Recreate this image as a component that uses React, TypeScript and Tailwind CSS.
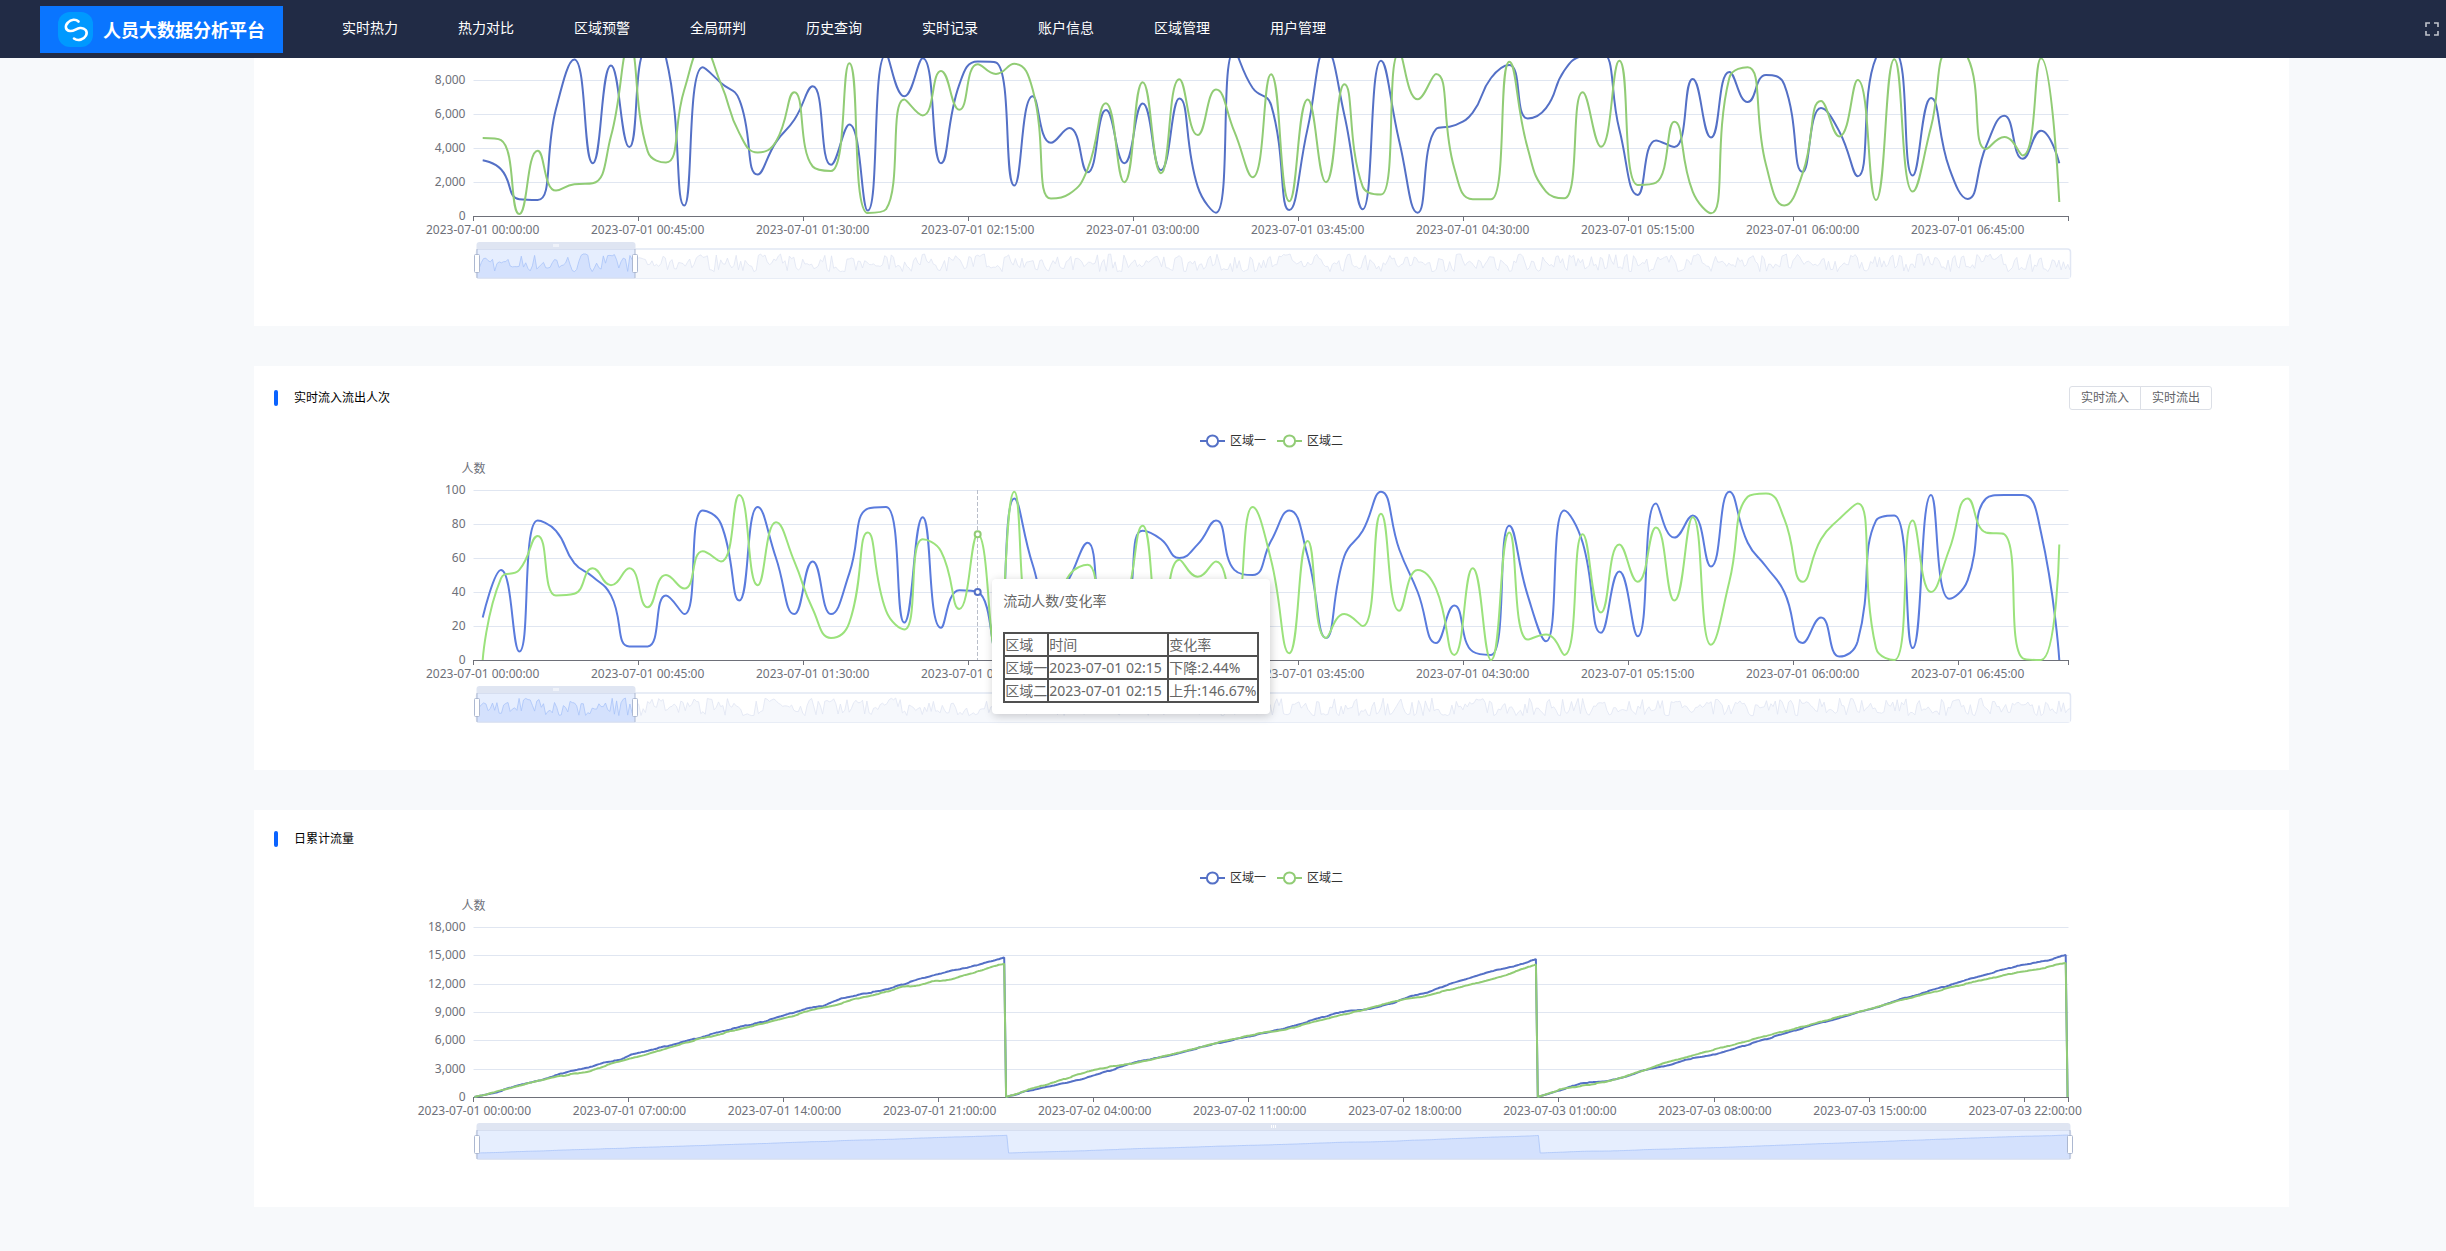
import React from "react";

const BLUE = "#5470C6";
const GREEN = "#91CC75";
const BLUE_ACTIVE = "#5A7BDD";
const GREEN_ACTIVE = "#9BE27C";

// Plot geometry in chart units
const WIDTH = 1995;
const LEFT = 199.5;
const RIGHT = 1794.5;
const TOP = 80;
const BOTTOM = 250;
const VIEW_TOP = 48;
const VIEW_HEIGHT = 292;
const SLIDER = { left: 203, right: 1796, top: 283, height: 29 };

const NAV = ["实时热力", "热力对比", "区域预警", "全局研判", "历史查询", "实时记录", "账户信息", "区域管理", "用户管理"];

const headcountOne = [
  3285, 2750, 983, 944, 6310, 9205, 3108, 8850, 4050, 9850, 9300, 610, 8750, 7830, 6850, 2440, 4350, 5660, 7630, 3010,
  5390, 315, 9500, 7040, 9280, 3108, 7730, 9087, 9030, 1790, 7040, 4308, 5173, 2577, 6235, 3108, 6610, 2695, 6904, 1730,
  197, 9700, 7530, 6550, 354, 5170, 9800, 5960, 393, 9127, 4386, 197, 5114, 5330, 6080, 8120, 8890, 5743, 6350, 8556,
  9440, 9600, 5100, 1240, 4445, 4052, 8065, 4622, 8478, 6707, 8300, 7730, 2596, 6353, 4976, 2340, 9300, 9650, 2380, 6943,
  2813, 1003, 4090, 5900, 3363, 5016, 3108,
];
const headcountTwo = [
  4583, 4465, 118, 3835, 1495, 1870, 1928, 4700, 9950, 3800, 3147, 7430, 9890, 7770, 4878, 3737, 4386, 7278, 2911, 2655,
  8990, 177, 393, 6845, 5920, 8537, 6255, 8930, 8360, 8950, 7435, 1023, 1298, 2773, 6629, 1987, 7868, 2518, 8045, 4760,
  7435, 4976, 2282, 8340, 865, 6845, 1987, 7750, 1730, 1259, 9600, 6865, 8360, 2813, 983, 983, 9070, 3990, 1436, 1042,
  7278, 4072, 9127, 1830, 1967, 5547, 1436, 157, 8124, 8753, 3010, 610, 2518, 6766, 4681, 8006, 944, 9225, 1436, 5232,
  9700, 9323, 3934, 4642, 3560, 9284, 826,
];
const flowOne = [
  25, 53, 5, 82, 76, 57, 49, 38, 8, 8, 38, 27, 88, 80, 35, 90, 60, 27, 58, 27, 51, 89, 90, 22, 84, 19, 41, 40, 5, 95, 56,
  28, 48, 69, 20, 25, 76, 71, 60, 68, 82, 53, 50, 70, 88, 61, 13, 61, 76, 99, 65, 40, 10, 32, 5, 3, 79, 38, 11, 88, 69,
  16, 52, 14, 92, 72, 85, 55, 99, 69, 55, 40, 10, 25, 2, 11, 82, 85, 7, 97, 36, 47, 95, 97, 97, 75, 0,
];
const flowTwo = [
  0, 48, 53, 73, 38, 39, 54, 44, 54, 31, 50, 42, 64, 58, 97, 44, 81, 58, 30, 13, 22, 75, 29, 18, 71, 64, 30, 74, 5, 99,
  20, 25, 50, 56, 10, 30, 79, 15, 59, 49, 58, 25, 90, 59, 4, 70, 13, 27, 20, 86, 29, 53, 42, 3, 54, 0, 75, 12, 15, 3, 74,
  28, 68, 46, 78, 35, 84, 9, 46, 96, 98, 83, 46, 71, 83, 92, 7, 0, 82, 40, 65, 95, 75, 74, 1, 0, 68,
];

// Cumulative totals per day: [five-minute slot, total]
type Knot = [number, number];
const totalOne: Knot[][] = [
  [[0, 0], [11, 460], [23, 1200], [36, 1800], [51, 2720], [62, 3110], [70, 3680], [79, 3920], [85, 4490], [100, 5200], [120, 6190], [137, 7110], [154, 7850], [168, 8630], [179, 9330], [189, 9620], [199, 10430], [212, 11000], [220, 11210], [229, 11740], [238, 12310], [248, 12840], [260, 13440], [267, 13650], [275, 14110], [281, 14430], [287, 14780]],
  [[0, 0], [12, 670], [26, 1240], [41, 1910], [55, 2720], [72, 3780], [87, 4310], [101, 5020], [116, 5760], [133, 6470], [150, 7210], [167, 8200], [181, 8980], [197, 9370], [210, 9970], [219, 10680], [227, 10960], [239, 11880], [254, 12800], [266, 13470], [275, 13830], [287, 14600]],
  [[0, 0], [12, 710], [24, 1490], [36, 1660], [46, 2020], [55, 2690], [72, 3430], [80, 3960], [89, 4240], [97, 4560], [140, 7100], [182, 9400], [195, 10240], [241, 12880], [260, 13900], [275, 14400], [286, 15050], [287, 0]],
];
const totalTwo: Knot[][] = [
  [[0, 0], [11, 530], [23, 1170], [36, 1770], [47, 2230], [62, 2720], [76, 3640], [91, 4380], [105, 5230], [120, 6050], [137, 6860], [154, 7670], [173, 8590], [183, 9230], [195, 9720], [207, 10400], [222, 11070], [231, 11630], [241, 11810], [248, 12230], [258, 12410], [265, 12910], [275, 13400], [281, 13830], [287, 14110]],
  [[0, 0], [12, 780], [26, 1560], [43, 2620], [56, 3180], [67, 3470], [87, 4380], [116, 5830], [137, 6750], [152, 7140], [167, 7990], [191, 9090], [200, 9620], [215, 10330], [225, 10610], [239, 11280], [256, 12090], [271, 12910], [287, 14040]],
  [[0, 0], [12, 780], [24, 1200], [36, 1560], [48, 2190], [68, 3540], [84, 4380], [97, 5100], [140, 7300], [182, 9400], [195, 10150], [230, 11900], [260, 13200], [275, 13700], [286, 14200], [287, 0]],
];

function seeded(seed: number) {
  let s = seed;
  return () => {
    s = (s * 16807) % 2147483647;
    return s / 2147483647;
  };
}

function expandDays(days: Knot[][], seed: number): number[] {
  const next = seeded(seed);
  const out: number[] = [];
  days.forEach((knots) => {
    let k = 0;
    let jitter = 0;
    for (let i = 0; i < 288; i++) {
      while (k < knots.length - 2 && i > knots[k + 1][0]) k++;
      const [x0, y0] = knots[k];
      const [x1, y1] = knots[k + 1];
      if (i % 4 === 0) jitter = (next() - 0.5) * 90;
      const v = y0 + ((y1 - y0) * (i - x0)) / (x1 - x0);
      out.push(i < 4 || i > 284 ? v : v + jitter);
    }
  });
  return out;
}

function toPoints(values: number[], max: number): Knot[] {
  const band = (RIGHT - LEFT) / values.length;
  return values.map((v, i) => [LEFT + (i + 0.5) * band, BOTTOM - (v / max) * (BOTTOM - TOP)]);
}

const clamp = (v: number, a: number, b: number) => Math.max(Math.min(a, b), Math.min(Math.max(a, b), v));

// Bezier smoothing whose control points never overshoot the neighbouring samples
function smoothPath(pts: Knot[]): string {
  const smooth = 0.5;
  let d = `M${pts[0][0].toFixed(1)} ${pts[0][1].toFixed(1)}`;
  let [c0x, c0y] = pts[0];
  for (let i = 1; i < pts.length; i++) {
    const [px, py] = pts[i - 1];
    const [x, y] = pts[i];
    let c1x = x;
    let c1y = y;
    let nx = x;
    let ny = y;
    if (i < pts.length - 1) {
      const [qx, qy] = pts[i + 1];
      const lenPrev = Math.hypot(x - px, y - py);
      const lenNext = Math.hypot(qx - x, qy - y);
      const ratio = lenNext / (lenNext + lenPrev);
      nx = clamp(x + (qx - px) * smooth * ratio, x, qx);
      ny = clamp(y + (qy - py) * smooth * ratio, y, qy);
      c1x = clamp(x - ((nx - x) * lenPrev) / lenNext, px, x);
      c1y = clamp(y - ((ny - y) * lenPrev) / lenNext, py, y);
      nx = x + ((x - c1x) * lenNext) / lenPrev;
      ny = y + ((y - c1y) * lenNext) / lenPrev;
    }
    d += `C${[c0x, c0y, c1x, c1y, x, y].map((n) => n.toFixed(1)).join(" ")}`;
    c0x = nx;
    c0y = ny;
  }
  return d;
}

const linePath = (pts: Knot[]) => "M" + pts.map(([x, y]) => `${x.toFixed(1)} ${y.toFixed(1)}`).join("L");

function overview(values: number[]): string {
  const lo = SLIDER.top + SLIDER.height - 6;
  const hi = SLIDER.top + 5;
  const max = Math.max(...values);
  const step = (SLIDER.right - SLIDER.left) / (values.length - 1);
  return linePath(values.map((v, i) => [SLIDER.left + i * step, lo - (v / max) * (lo - hi)]));
}

function noise(seed: number): number[] {
  const next = seeded(seed);
  const out: number[] = [];
  let v = 0.5;
  for (let i = 0; i < 720; i++) {
    v = next() > 0.75 ? v + (next() - 0.5) * 0.3 : next();
    v = Math.max(0.02, Math.min(1, v));
    out.push(v);
  }
  return out;
}

type ChartProps = {
  label: string;
  one: number[];
  two: number[];
  max: number;
  step: number;
  every: number;
  xLabels: string[];
  smooth?: boolean;
  active?: number;
  axisName?: boolean;
  colors?: [string, string];
  windowEnd: number;
  shadow: number[];
};

function Chart({ label, one, two, max, step, every, xLabels, smooth, active, axisName = true, colors = [BLUE, GREEN], windowEnd, shadow }: ChartProps) {
  const path = smooth ? smoothPath : linePath;
  const ptsOne = toPoints(one, max);
  const ptsTwo = toPoints(two, max);
  const band = (RIGHT - LEFT) / one.length;
  const ticks = Array.from({ length: Math.round(max / step) + 1 }, (_, i) => i * step);
  const yOf = (v: number) => Math.round(BOTTOM - (v / max) * (BOTTOM - TOP));
  const shape = overview(shadow);
  const base = SLIDER.top + SLIDER.height;
  const area = `${shape}L${SLIDER.right} ${base}L${SLIDER.left} ${base}Z`;
  const clipId = `window-${label}`;
  const mid = (SLIDER.left + windowEnd) / 2;
  return (
    <svg viewBox={`0 ${VIEW_TOP} ${WIDTH} ${VIEW_HEIGHT}`} className="block w-full" role="img" aria-label={label}>
      <clipPath id={clipId}>
        <rect x={SLIDER.left} y={SLIDER.top} width={windowEnd - SLIDER.left} height={SLIDER.height} />
      </clipPath>
      <g fontSize={12} fill="#6E7079">
        {axisName && (
          <text x={LEFT} y={63} textAnchor="middle">人数</text>
        )}
        {ticks.map((t) => (
          <g key={t}>
            {t > 0 && <line x1={LEFT} x2={RIGHT} y1={yOf(t) + 0.5} y2={yOf(t) + 0.5} stroke="#E0E6F1" />}
            <text x={LEFT - 8} y={yOf(t) + 4} textAnchor="end">{t.toLocaleString("en-US")}</text>
          </g>
        ))}
        {xLabels.map((t, i) => (
          <text key={t} x={LEFT + (i * every + 0.5) * band} y={268} textAnchor="middle">{t}</text>
        ))}
      </g>
      <g stroke="#6E7079">
        <line x1={LEFT} x2={RIGHT} y1={BOTTOM + 0.5} y2={BOTTOM + 0.5} />
        {xLabels.map((t, i) => {
          const x = Math.floor(LEFT + i * every * band) + 0.5;
          return <line key={t} x1={x} x2={x} y1={BOTTOM} y2={BOTTOM + 5} />;
        })}
        <line x1={RIGHT} x2={RIGHT} y1={BOTTOM} y2={BOTTOM + 5} />
      </g>
      {active !== undefined && (
        <line x1={Math.floor(ptsOne[active][0]) + 0.5} x2={Math.floor(ptsOne[active][0]) + 0.5} y1={TOP} y2={BOTTOM} stroke="#B9BEC9" strokeDasharray="4 2" />
      )}
      <g fill="none" strokeWidth={2} strokeLinejoin="bevel">
        <path d={path(ptsOne)} stroke={colors[0]} />
        <path d={path(ptsTwo)} stroke={colors[1]} />
      </g>
      {active !== undefined && (
        <g fill="#fff" strokeWidth={2}>
          <circle cx={ptsOne[active][0]} cy={ptsOne[active][1]} r={3} stroke={BLUE} />
          <circle cx={ptsTwo[active][0]} cy={ptsTwo[active][1]} r={3} stroke={GREEN} />
        </g>
      )}

      <rect x={SLIDER.left - 0.5} y={SLIDER.top} width={SLIDER.right - SLIDER.left + 1} height={SLIDER.height} rx={3} fill="#fff" stroke="#E1E7F4" strokeWidth={1.5} />
      <path d={area} fill="#F6F8FC" />
      <path d={shape} fill="none" stroke="#DFE5F2" strokeWidth={0.8} />
      <g clipPath={`url(#${clipId})`}>
        <rect x={SLIDER.left} y={SLIDER.top} width={windowEnd - SLIDER.left} height={SLIDER.height} fill="#E6EEFE" />
        <path d={area} fill="#D4E1FD" />
        <path d={shape} fill="none" stroke="#A9C4F9" strokeWidth={0.8} />
      </g>
      <path d={`M${SLIDER.left - 0.5} ${SLIDER.top}V279a3 3 0 0 1 3 -3H${windowEnd - 2.5}a3 3 0 0 1 3 3V${SLIDER.top}Z`} fill="#DFE5F2" />
      <line x1={SLIDER.left} x2={windowEnd} y1={SLIDER.top + 0.5} y2={SLIDER.top + 0.5} stroke="#D6DEF0" />
      <line x1={SLIDER.left} x2={windowEnd} y1={base} y2={base} stroke="#D6DEF0" />
      <g fill="#fff">
        {[-2.5, -0.5, 1.5].map((o) => (
          <rect key={o} x={mid + o} y={278} width={1} height={3} />
        ))}
      </g>
      {[SLIDER.left, windowEnd].map((x) => (
        <g key={x} stroke="#ACB8D1">
          <line x1={x} x2={x} y1={SLIDER.top} y2={base} />
          <rect x={x - 2.5} y={288.5} width={5} height={18} rx={1} fill="#fff" />
        </g>
      ))}
    </svg>
  );
}

function LegendItem({ name, color }: { name: string; color: string }) {
  return (
    <button type="button" className="flex items-center gap-[5px] text-xs leading-4 text-[#333]">
      <svg width="25" height="14" viewBox="0 0 25 14" fill="#fff" stroke={color} strokeWidth="2" aria-hidden="true">
        <path d="M0 7H25" />
        <circle cx="12.5" cy="7" r="5.6" />
      </svg>
      {name}
    </button>
  );
}

function Legend() {
  return (
    <div className="flex h-12 items-start justify-center gap-[11px] pt-[23px]">
      <LegendItem name="区域一" color={BLUE} />
      <LegendItem name="区域二" color={GREEN} />
    </div>
  );
}

function CardTitle({ children }: { children: React.ReactNode }) {
  return (
    <h2 className="flex items-center gap-4 text-xs leading-4 text-black">
      <span className="h-4 w-1 rounded-sm bg-[#0A63FF]" />
      {children}
    </h2>
  );
}

const CELL = "border-2 border-[#505050] p-0 text-left font-normal";

function Tooltip() {
  return (
    <div className="absolute top-[169px] left-[36%] rounded-sm bg-white p-[11px] text-sm leading-[21px] whitespace-nowrap text-[#666] shadow-[1px_2px_10px_rgba(0,0,0,0.2)]">
      <p className="mb-[21px]">流动人数/变化率</p>
      <table className="border-collapse">
        <thead>
          <tr>
            <th className={`${CELL} min-w-11`}>区域</th>
            <th className={`${CELL} min-w-[120px]`}>时间</th>
            <th className={`${CELL} min-w-[90px]`}>变化率</th>
          </tr>
        </thead>
        <tbody>
          <tr>
            <td className={CELL}>区域一</td>
            <td className={CELL}>2023-07-01 02:15</td>
            <td className={CELL}>下降:2.44%</td>
          </tr>
          <tr>
            <td className={CELL}>区域二</td>
            <td className={CELL}>2023-07-01 02:15</td>
            <td className={CELL}>上升:146.67%</td>
          </tr>
        </tbody>
      </table>
    </div>
  );
}

const quarterLabels = ["00:00", "00:45", "01:30", "02:15", "03:00", "03:45", "04:30", "05:15", "06:00", "06:45"].map((t) => `2023-07-01 ${t}:00`);
const dayLabels = ["01 00", "01 07", "01 14", "01 21", "02 04", "02 11", "02 18", "03 01", "03 08", "03 15", "03 22"].map((t) => `2023-07-${t}:00:00`);
const dailyOne = expandDays(totalOne, 11);
const dailyTwo = expandDays(totalTwo, 23);

export default function App() {
  return (
    <div className="min-h-screen overflow-hidden bg-[#F7F9FB] font-['Noto_Sans','Noto_Sans_CJK_SC',sans-serif]">
      <header className="relative z-10 flex h-[58px] items-center bg-[#212B45] pr-[7px] pl-10">
        <a href="#" className="mt-[1px] flex h-[47px] w-[243px] items-center gap-[10px] bg-[#0A75FF] pl-[18px] text-lg font-bold whitespace-nowrap text-white">
          <svg width="35" height="35" viewBox="0 0 35 35" aria-hidden="true">
            <rect width="35" height="35" rx="12" fill="#0099FF" />
            <path d="M20.5 9.5C18 7 13 7 10 10.5C6.5 14 7.5 18.5 12 19C16 19.5 18 16.500 22 16C27 15.5 30 19.5 28 23.5C26 27.5 20 29.5 16 26.5" fill="none" stroke="#fff" strokeWidth="2.6" strokeLinecap="round" />
          </svg>
          人员大数据分析平台
        </a>
        <nav className="mb-0.5 ml-[59px] flex gap-[60px] text-sm whitespace-nowrap text-white">
          {NAV.map((item) => (
            <a key={item} href="#">{item}</a>
          ))}
        </nav>
        <button type="button" aria-label="全屏" className="ml-auto">
          <svg width="14" height="14" viewBox="0 0 14 14" fill="none" stroke="#C0C4CC" strokeWidth="1.6" aria-hidden="true">
            <path d="M1 5V1H5M9 1H13V5M13 9V13H9M5 13H1V9" />
          </svg>
        </button>
      </header>

      <main className="-mt-16 flex flex-col gap-10 pr-[157px] pb-11 pl-[254px]">
        <section className="bg-white p-5">
          <Chart label="headcount" one={headcountOne} two={headcountTwo} max={10000} step={2000} every={9} xLabels={quarterLabels} smooth axisName={false} windowEnd={361} shadow={noise(7)} />
        </section>

        <section className="bg-white p-5">
          <div className="flex items-center justify-between pr-[57px]">
            <CardTitle>实时流入流出人次</CardTitle>
            <div className="flex text-xs leading-[22px] text-[#606266]">
              <button type="button" className="rounded-l-[3px] border border-[#DCDFE6] px-[11px]">实时流入</button>
              <button type="button" className="-ml-px rounded-r-[3px] border border-[#DCDFE6] px-[11px]">实时流出</button>
            </div>
          </div>
          <div className="relative">
            <Legend />
            <Chart label="flow" one={flowOne} two={flowTwo} max={100} step={20} every={9} xLabels={quarterLabels} smooth active={27} colors={[BLUE_ACTIVE, GREEN_ACTIVE]} windowEnd={361} shadow={noise(41)} />
            <Tooltip />
          </div>
        </section>

        <section className="bg-white p-5">
          <div className="pt-px">
            <CardTitle>日累计流量</CardTitle>
          </div>
          <Legend />
          <Chart label="daily" one={dailyOne} two={dailyTwo} max={18000} step={3000} every={84} xLabels={dayLabels} windowEnd={SLIDER.right} shadow={dailyOne} />
        </section>
      </main>
    </div>
  );
}
